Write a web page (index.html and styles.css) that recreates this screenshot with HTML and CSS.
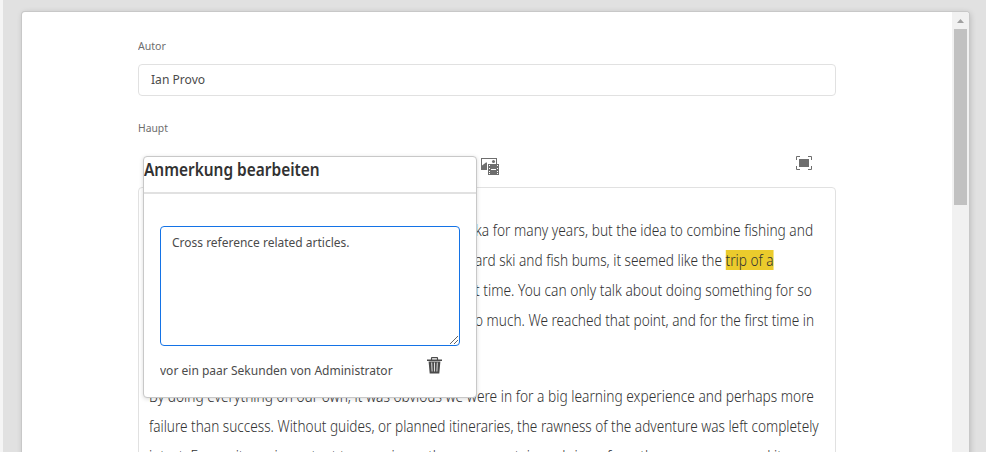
FILE: index.html
```html
<!DOCTYPE html>
<html lang="de">
<head>
<meta charset="utf-8">
<title>Anmerkung bearbeiten</title>
<link rel="stylesheet" href="styles.css">
</head>
<body>
<main class="card">
  <section class="content">
    <div class="label"><span class="t-autor">Autor</span></div>
    <div class="input"><span class="t-name">Ian Provo</span></div>
    <div class="label second"><span class="t-haupt">Haupt</span></div>
    <div class="toolbar">
      <svg class="media" width="18" height="18" viewBox="0 0 18 18"><path d="M0 0H16V6H15V1H1V7.500L5 4.500H6V12H0Z" fill="#6e6e6e"/><circle cx="12.500" cy="3.500" r="1.500" fill="#6e6e6e"/><rect x="7" y="6" width="11" height="11" fill="#6e6e6e"/><path d="M8 7h1v1H8zm0 3h1v1H8zm0 3h1v1H8zm0 2h1v1H8zm8-8h1v1h-1zm0 3h1v1h-1zm0 3h1v1h-1zm0 2h1v1h-1zM10 11h5v1h-5z" fill="#fff"/></svg>
      <svg class="full" width="16" height="14" viewBox="0 0 16 14"><path d="M.5 4V.5H4M12 .5h3.500V4M15.500 10v3.500H12M4 13.500H.5V10" fill="none" stroke="#6e6e6e"/><rect x="3" y="3" width="10" height="8" fill="#6e6e6e"/></svg>
    </div>
    <div class="editor">
      <p class="line behind"><span class="l1">ka for many years, but the idea to combine fishing and</span></p>
      <p class="line behind"><span class="l2">ard ski and fish bums, it seemed like the <mark>trip of a</mark></span></p>
      <p class="line behind"><span class="l3">t time. You can only talk about doing something for so</span></p>
      <p class="line behind"><span class="l4">o much. We reached that point, and for the first time in</span></p>
      <p class="line para"><span class="l5">By doing everything on our own, it was obvious we were in for a big learning experience and perhaps more</span></p>
      <p class="line"><span class="l6">failure than success. Without guides, or planned itineraries, the rawness of the adventure was left completely</span></p>
      <p class="line"><span class="l7">intact. For us, it was important to experience the raw mountain and rivers from the same source and it</span></p>
    </div>
  </section>
  <aside class="scroll"><svg width="7" height="4" viewBox="0 0 7 4"><path d="M0 4 3.500 0 7 4Z" fill="#a0a0a0"/></svg><div class="thumb"></div></aside>
</main>
<section class="popup">
  <h1><span class="t-title">Anmerkung bearbeiten</span></h1>
  <div class="note"><span class="t-note">Cross reference related articles.</span><svg width="8" height="8" viewBox="0 0 8 8"><path d="M0 8 8 0M4 8 8 4" stroke="#555" stroke-width=".9"/></svg></div>
  <footer><span class="t-foot">vor ein paar Sekunden von Administrator</span>
    <svg width="15" height="17" viewBox="0 0 15 17"><path d="M4.500 3V1.200Q4.500.6 5 .6h5q.5 0 .5.600V3" fill="none" stroke="#4b4b4b" stroke-width="1.200"/><path d="M0 2.500h15v1.600H0zM1.600 4.500h11.800l-1.100 12H2.700z" fill="#4b4b4b"/><path d="m4.700 5.500.4 9M7.500 5.500v9M10.300 5.500l-.4 9" stroke="#ddd"/></svg>
  </footer>
</section>
</body>
</html>
```
FILE: styles.css
```css
* { box-sizing: border-box; }
body { margin: 0; width: 986px; height: 452px; overflow: hidden; background: #e1e1e1; border-left: 3px solid #f5f5f5; font-family: "Noto Sans", sans-serif; color: #4b4b4b; position: relative; }
.card { display: flex; margin: 12px 0 0 19px; width: 947px; height: 460px; background: #fff; border-radius: 3px 3px 0 0; box-shadow: 0 0 0 1px #c8c8c8, 1px 1px 6px rgba(0,0,0,.2); overflow: hidden; }
.content { width: 930px; padding: 25px 0 0 116px; }
.label { height: 18px; line-height: 18px; font-size: 11px; color: #6e6e6e; }
.input { width: 698px; height: 32px; margin-top: 9px; border: 1px solid #e1e1e1; border-radius: 4px; padding-left: 11px; line-height: 29px; font-size: 13px; }
.second { margin-top: 23px; }
.toolbar { display: flex; justify-content: space-between; height: 50px; width: 698px; padding: 21px 24px 0 343px; }
.full { margin-top: -2px; }
.editor { width: 698px; height: 300px; border: 1px solid #e1e1e1; border-radius: 4px; padding: 27px 0 0 10px; font-size: 16px; font-weight: 300; color: #323232; }
.line { margin: 0; height: 30px; line-height: 30px; white-space: nowrap; }
.behind { padding-left: 326px; }
.para { margin-top: 46px; }
mark { display: inline-block; height: 20px; line-height: 20px; background: #ebcb2c; color: inherit; }
.line span, .label span, .input span, h1 span, .note span, footer span { display: inline-block; white-space: nowrap; transform-origin: 0 50%; }
.l1 { transform: scaleX(.8575); }
.l2 { transform: scaleX(.853); }
.l3 { transform: scaleX(.86); }
.l4 { transform: scaleX(.852); }
.l5 { transform: scaleX(.859); }
.l6 { transform: scaleX(.851); }
.l7 { transform: scaleX(.856); }
.t-autor { transform: scaleX(.96); }
.t-haupt { transform: scaleX(.94); }
.t-name { transform: translateX(1px) scaleX(.93); }
.t-title { transform: scaleX(.907); }
.t-note { transform: scaleX(.922); }
.t-foot { transform: scaleX(.926); }
.scroll { width: 17px; background: #f1f1f1; display: flex; flex-direction: column; align-items: center; padding-top: 7px; }
.thumb { width: 13px; height: 176px; margin-top: 6px; background: #c1c1c1; }
.popup { position: absolute; left: 140px; top: 156px; width: 334px; height: 242px; background: #fff; border: 1px solid #c8c8c8; border-radius: 4px; box-shadow: 0 1px 4px rgba(0,0,0,.15); }
h1 { margin: 0; height: 37px; border-bottom: 2px solid #e1e1e1; font-size: 17px; line-height: 25px; font-weight: 600; color: #323232; }
.note { width: 300px; height: 120px; margin: 32px 0 0 16px; border: 1px solid #1473e6; border-radius: 4px; padding: 5px 11px; font-size: 13px; line-height: 20px; position: relative; }
.note svg { position: absolute; right: 1px; bottom: 1px; }
footer { display: flex; justify-content: space-between; padding: 11px 34px 0 16px; font-size: 13px; line-height: 26px; }
footer svg { flex: none; margin-left: -20px; }
```
